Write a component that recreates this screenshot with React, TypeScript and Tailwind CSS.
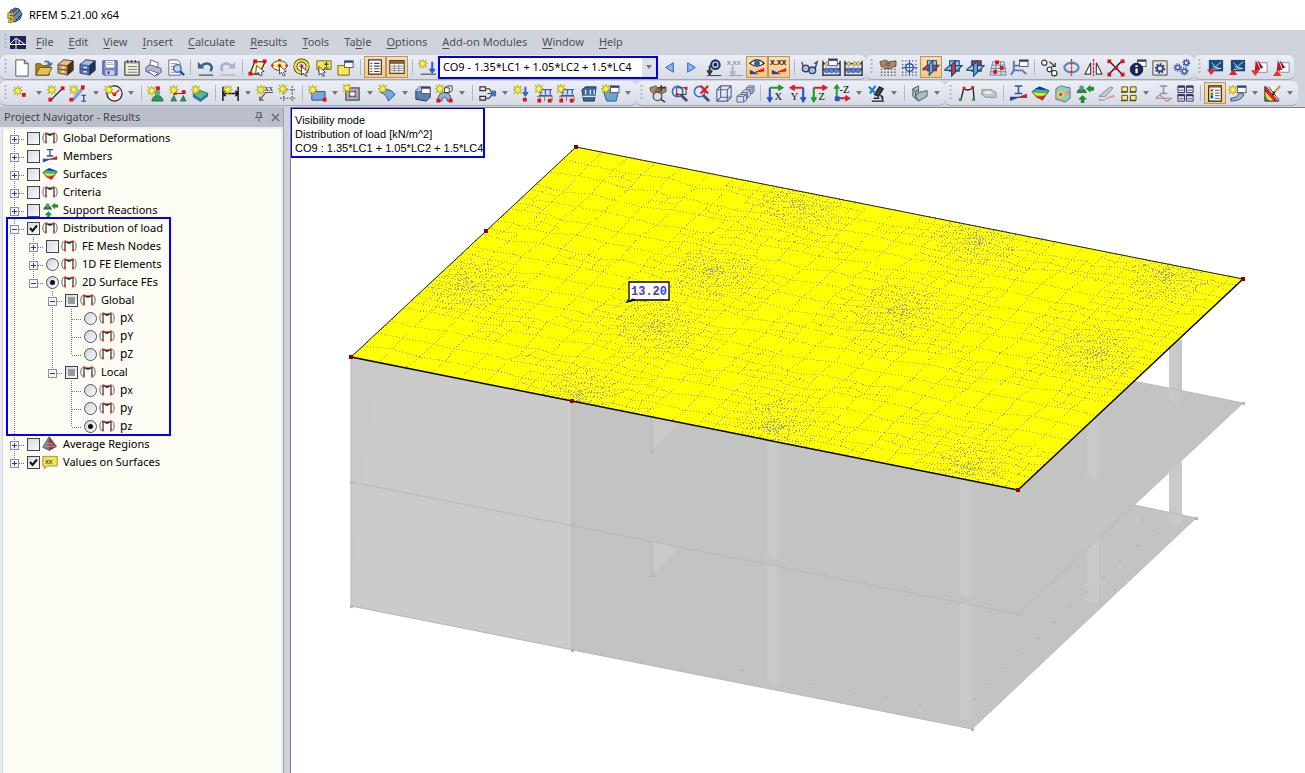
import React from 'react';

const Star = ({ x = 5, y = 5 }: { x?: number; y?: number }) => (
  <g transform={`translate(${x} ${y})`}>
    <path d="M0-5 1.2-2 4-4 2.3-1 5 0 2.3 1 4 4 1.2 2.4 0 5-1.2 2.4-4 4-2.3 1-5 0-2.3-1-4-4-1.2-2z" fill="#f7ec1c" stroke="#9a9420" strokeWidth=".6" />
    <circle r="1.2" fill="#fffbb0" />
  </g>
);

const Dot = ({ x, y, c = '#e0101c' }: { x: number; y: number; c?: string }) => (
  <rect x={x - 1.5} y={y - 1.5} width="4" height="4" fill={c} />
);

const Frame = () => (
  <g fill="none">
    <path d="M5 15V5h10v10M7 5q3 3 6 0" stroke="#222" strokeWidth="1.4" />
    <path d="M3 16Q-1 10 3 4M17 16Q21 10 17 4" stroke="#444" strokeWidth="1" />
    <path d="M4 3h3v2H4zM13 3h3v2h-3zM4 14h2v3H4zM14 14h2v3h-2z" fill="#d22" />
  </g>
);

const Window = ({ x = 10, y = 2 }: { x?: number; y?: number }) => (
  <g>
    <rect x={x} y={y} width="9" height="7" fill="#fff" stroke="#555b6e" />
    <path d={`M${x} ${y + 1}h9`} stroke="#2d3f7c" strokeWidth="2" />
  </g>
);

const Cube = ({ faces }: { faces: string[] }) => (
  <g stroke="#333" strokeWidth=".7">
    <path d="M2 7 8 2 18 3V13L12 18 2 16z" fill={faces[0]} />
    <path d="M2 7 8 2 18 3 12 8z" fill={faces[1]} />
    <path d="M12 8 18 3V13L12 18z" fill={faces[2]} />
    <path d="M2 11.500 12 13" fill="none" />
    <path d="M6 10h3M6 14.500h3" stroke="#fff" strokeWidth="1.600" />
  </g>
);

const Planes = ({ a, b, c }: { a: string; b: string; c: string }) => (
  <g stroke="#174a80" strokeWidth="1.200">
    <path d="M6 3h10v11H6z" fill={a} />
    <path d="M1 12 6 8h13l-5 5H1z" fill={b} />
    <path d="M8 7 12 3v12l-4 4z" fill={c} />
  </g>
);

const Loads = () => (
  <g fill="none">
    <path d="M4 6h14M4 12h14" stroke="#1f3f9c" />
    <path d="M6 6v5M11 6v5M16 6v5" stroke="#3b66cf" strokeWidth="1.500" />
    <path d="M2 13h16v5M5 13v5M10 13v5" stroke="#777" />
    <Dot x={4} y={17} />
    <Dot x={15} y={17} />
  </g>
);

const Abacus = () => (
  <g>
    <path d="M1 3v16M19 3v16M1 6h18M1 12h18M1 18h18" stroke="#222" strokeWidth="1.400" />
    <g fill="#e8d26a" stroke="#6f6420" strokeWidth=".6"><circle cx="5" cy="6" r="2" /><circle cx="15" cy="6" r="2" /><circle cx="11" cy="6" r="2" /></g>
    <g fill="#5580d6" stroke="#23407e" strokeWidth=".6"><circle cx="5" cy="13" r="2.600" /><circle cx="10" cy="13" r="2.600" /><circle cx="15" cy="13" r="2.600" /></g>
  </g>
);

const Lens = ({ c = '#3d66b8' }: { c?: string }) => (
  <g fill="none">
    <circle cx="8" cy="8" r="5.500" fill="#dfeaff" stroke={c} strokeWidth="1.600" />
    <path d="m12 12 6 6" stroke="#3e4d78" strokeWidth="3" />
  </g>
);

const Hand = () => (
  <g>
    <path d="M2 4 8 2l3 2 8-1v5l-6 3H7L3 8z" fill="#b08a68" stroke="#4a3626" strokeWidth=".8" />
    <path d="m8 5 5 1M7 7l6 1" stroke="#4a3626" strokeWidth=".8" />
  </g>
);

const Grid = () => (
  <path d="M3 9h16M3 12h16M3 15h16M3 18h16" stroke="#555" strokeWidth="1.500" strokeDasharray="1.500 2" />
);

const Axes = ({ v, h, t, flip = false }: { v: string; h: string; t: string; flip?: boolean }) => (
  <g>
    <g transform={flip ? 'translate(20 0) scale(-1 1)' : ''} fill="none" strokeWidth="2.200">
      <path d="M4 4v13M1.500 14 4 18l2.500-4" stroke={v} />
      <path d="M4 4h12M13 1.500 17 4l-4 2.500" stroke={h} />
    </g>
    <text x={flip ? 3 : 9} y="17" fontSize="11" fontFamily="Liberation Serif, serif" fill="#111">{t}</text>
  </g>
);

const Person = () => (
  <g><path d="M5 18Q6 12 11 12t6 6z" fill="#2c9a58" stroke="#14532e" strokeWidth=".7" /><circle cx="11" cy="9" r="3" fill="#4fb878" /></g>
);

const Profile = ({ c = '#2f559c' }: { c?: string }) => (
  <path d="M6 2h8M10 2v8M6 10h8" stroke={c} strokeWidth="1.600" fill="none" />
);

const ICONS: Record<string, React.ReactNode> = {
  new: <path d="M4 2h9l4 4v13H4zM13 2v4h4" fill="#fff" stroke="#555" />,
  open: <><path d="M2 18V6h5l2 2h7v10z" fill="#a8861c" stroke="#6a540e" /><path d="M2 18 6 10h13l-4 8z" fill="#e2c250" stroke="#6a540e" /><path d="M11 4q5-2 6 4M14 6l3 2 2-3" stroke="#3a76b4" strokeWidth="1.800" fill="none" /></>,
  cabinet: <Cube faces={['#d19a50', '#edc27c', '#4a3014']} />,
  cabinetBlue: <Cube faces={['#4f78c8', '#9dbcf0', '#1d2f60']} />,
  save: <><path d="M3 3h15v15H4l-1-1z" fill="#7d84c4" stroke="#3e4a88" /><path d="M6 3h9v7H6z" fill="#fff" /><path d="M7 5h7M7 7h7" stroke="#9aa" /><path d="M6 13h9v5H6z" fill="#c9cfe8" /><path d="M8 14h2v3H8z" fill="#333e78" /></>,
  notes: <><path d="M3 4h15v14H3z" fill="#f5efe0" stroke="#4a4440" strokeWidth="1.300" /><path d="M4 5h13" stroke="#b8a890" strokeWidth="2" /><path d="M6 9h10M6 12h10M6 15h10" stroke="#777" /><path d="M6 2v3M10 2v3M14 2v3" stroke="#444" strokeWidth="1.400" /></>,
  print: <><path d="M6 9 7 2l8 3-1 6z" fill="#fff" stroke="#667" /><path d="M2 10 6 7l12 4v4l-5 4L2 14z" fill="#b4b9da" stroke="#555b7a" /><path d="m4 14 7 5 4-3-8-3z" fill="#fff" stroke="#667" /></>,
  preview: <><path d="M3 2h9l3 3v13H3z" fill="#fff" stroke="#667" /><path d="M5 6h7M5 9h5M5 12h4M5 15h5" stroke="#889" /><circle cx="12" cy="11" r="4" fill="#b7d2f4" stroke="#3c62a0" strokeWidth="1.400" /><path d="m15 14 4 4" stroke="#334f86" strokeWidth="2.500" /></>,
  undo: <><path d="M2 4v7h7z" fill="#3c6090" /><path d="M5 9q5-5 10-2 3 3 0 7" fill="none" stroke="#3c6090" strokeWidth="2.600" /><path d="M3 18h15" stroke="#222" /></>,
  redo: <><path d="M18 4v7h-7z" fill="#a3b4cc" /><path d="M15 9q-5-5-10-2-3 3 0 7" fill="none" stroke="#a3b4cc" strokeWidth="2.600" /><path d="M3 18h15" stroke="#9aa3b4" /></>,
  selectRhomb: <><path d="M7 4h11l-6 13H2z" fill="#faf296" stroke="#222" strokeWidth="1.200" /><Dot x={7} y={3} /><Dot x={17} y={3} /><Dot x={2} y={16} /><path d="m9 8 8 6-3 1 1 3-2 1-2-4-3 2z" fill="#fff" stroke="#222" strokeWidth=".8" /></>,
  selectEllipse: <><ellipse cx="10" cy="8" rx="8" ry="5" fill="#faf296" stroke="#444" /><path d="M8.500 2h3M10 6v4M8 8h4M1 8h3M16 8h3" stroke="#d22" strokeWidth="1.800" /><path d="m10 8 7 6-3 1 2 3-2 1-2-4-2 2z" fill="#fff" stroke="#222" strokeWidth=".8" /></>,
  selectRing: <><circle cx="10" cy="9" r="6.500" fill="none" stroke="#222" strokeWidth="4" /><circle cx="10" cy="9" r="6.500" fill="none" stroke="#f5e52a" strokeWidth="2.600" /><path d="M10 6v5M8 8.500h4" stroke="#d22" strokeWidth="1.600" /><path d="m10 9 7 6-3 1 2 3-2 0-2-3-2 2z" fill="#fff" stroke="#222" strokeWidth=".8" /></>,
  selectAdd: <><path d="M3 3h15v9H9l-4 3v-3H3z" fill="#f7ea57" stroke="#6b6420" /><path d="M13 4v5M10.500 6.500h5M10.500 10.500h5" stroke="#222" /><path d="m5 9 7 6-3 1 2 3h-2l-1.500-3-2 2z" fill="#fff" stroke="#222" strokeWidth=".8" /></>,
  selectWin: <><path d="M2 8h12v10H2z" fill="#f7ea57" stroke="#6b6420" /><Window x={9} y={3} /></>,
  navigator: <><path d="M3 2h14v16H3z" fill="#fff" stroke="#333" strokeWidth="1.300" /><path d="M5 6h2M5 9h2M5 12h2M5 15h2M9 6h6M9 9h6M9 12h6M9 15h6" stroke="#444" strokeWidth="1.200" /></>,
  tables: <><path d="M2 3h16v14H2z" fill="#fff" stroke="#444" strokeWidth="1.300" /><path d="M2 5h16" stroke="#8a5a2a" strokeWidth="3" /><path d="M3 9h14M3 11.500h14M3 14h14M7 7v10M12 7v10" stroke="#888" /></>,
  newLoad: <><Star x={5} y={6} /><path d="M15 4v10M12.500 11.500 15 15l2.500-3.500" stroke="#2f5fc4" strokeWidth="2.200" fill="none" /><path d="M3 17h16" stroke="#333" /></>,
  prev: <path d="M14 5v10l-8-5z" fill="#8fb4f0" stroke="#2a5cc4" />,
  next: <path d="M6 5v10l8-5z" fill="#8fb4f0" stroke="#2a5cc4" />,
  resultEye: <><circle cx="12" cy="7" r="4.500" fill="#bcd2f4" stroke="#1f3560" strokeWidth="2.200" /><circle cx="12" cy="7" r="2" fill="#162848" /><path d="M6 8v8M3.500 13 6 17 8.500 13" stroke="#333" strokeWidth="2" fill="none" /><path d="M3 18.500h15" stroke="#333" /></>,
  valueGrey: <><text x="1" y="7" fontSize="8" fontFamily="Liberation Sans, sans-serif" fill="#777">x.xx</text><path d="M7 8v9M4.500 14 7 17.500 9.500 14" stroke="#a8b4cc" strokeWidth="2" fill="none" /><path d="M3 18.500h15" stroke="#999" /></>,
  showResults: <><path d="M2 6Q10-2 18 6 10 12 2 6z" fill="#fff" stroke="#222" strokeWidth="1.300" /><circle cx="10" cy="6" r="3.200" fill="#2c5fb8" /><path d="M4 17 18 11v4z" fill="#d8232a" /><path d="M2 13v5h10z" fill="#2540b4" /></>,
  showValues: <><text x="0" y="8" fontSize="8" fontWeight="bold" fontFamily="Liberation Sans, sans-serif" fill="#111">X.XX</text><path d="M4 17 18 11v4z" fill="#d8232a" /><path d="M2 13v5h10z" fill="#2540b4" /></>,
  glasses: <g fill="#a9bde0" stroke="#2f3f6c" strokeWidth="1.400"><circle cx="6" cy="11" r="3.500" /><circle cx="13" cy="13" r="3.500" /><path d="M3 8 2 4M16 11l2-7-3 2" fill="none" /></g>,
  abacusWin: <><Abacus /><Window x={7} y={1} /></>,
  abacus: <Abacus />,
  handGrid: <><Grid /><Hand /></>,
  snapGrid: <><path d="M2 3h16M2 7h16M2 11h16M2 15h16M2 18h16" stroke="#667" strokeWidth="1.500" strokeDasharray="1.500 2" /><circle cx="10" cy="10" r="4" fill="#e7eefb" stroke="#2555b2" strokeWidth="1.500" /><path d="M10 2v16M2 10h16" stroke="#2555b2" /></>,
  planeXY: <Planes a="#a9cfee" b="#e0342c" c="#6fa8dc" />,
  planeYZ: <Planes a="#a9cfee" b="#8fc0e8" c="#e0342c" />,
  planeXZ: <Planes a="#e0242c" b="#a9cfee" c="#6fa8dc" />,
  gridPlane: <><path d="M5 4h12l2 14H2zM3.500 11h15M9 4 7 18M13 4l1 14M4 7.500h14M3 14.500h16" fill="none" stroke="#6f8494" /><Dot x={9} y={4} /><Dot x={14} y={10} /><Dot x={7} y={14} /></>,
  workWin: <><path d="M4 3v10M4 8h8M4 13h10M4 13l-3 5M13 13l4 4" stroke="#5c76a4" strokeWidth="2" fill="none" /><Window /></>,
  move: <g fill="#fff" stroke="#333" strokeWidth="1.200"><circle cx="4.500" cy="5" r="2.800" /><circle cx="10" cy="12" r="2.500" /><circle cx="15" cy="16" r="2.800" /><path d="m10 4 6 5M16 5v4h-4" fill="none" /></g>,
  rotate: <><ellipse cx="10" cy="10" rx="7.500" ry="5" fill="none" stroke="#5f86c0" strokeWidth="2.400" /><path d="M10 1v18" stroke="#e02020" strokeWidth="1.400" strokeDasharray="3 1" /></>,
  mirror: <><path d="M7 5v12H1zM13 5v12h6z" fill="#fff" stroke="#444" strokeWidth="1.200" /><path d="M10 1v18" stroke="#e02020" strokeWidth="1.400" strokeDasharray="3 1" /></>,
  cross: <><path d="m3 3 14 14M17 3 3 17" stroke="#222" strokeWidth="1.500" /><Dot x={3} y={3} /><Dot x={17} y={3} /><Dot x={3} y={17} /><Dot x={17} y={17} /><Dot x={10} y={10} /></>,
  info: <><Window /><circle cx="9" cy="12" r="6.500" fill="#1a2460" stroke="#0c1238" /><path d="M9 11v5M9 7.500v2" stroke="#fff" strokeWidth="2.400" /></>,
  settings: <><path d="M3 3h15v15H3z" fill="#ece6d4" stroke="#444" /><circle cx="10.500" cy="11" r="4.500" fill="none" stroke="#2c4a8e" strokeWidth="2" strokeDasharray="2 1.400" /><circle cx="10.500" cy="11" r="3" fill="#fff" stroke="#2c4a8e" strokeWidth="2" /></>,
  gears: (
    <g fill="#fff" stroke="#3c5fa8">
      <g strokeWidth="1.600"><circle cx="6" cy="10" r="2.200" /><circle cx="15" cy="5" r="2.200" /><circle cx="13" cy="14" r="2.200" /></g>
      <g fill="none" strokeWidth="1.500" strokeDasharray="1.300 1.300"><circle cx="6" cy="10" r="3.700" /><circle cx="15" cy="5" r="3.500" /><circle cx="13" cy="14" r="3.700" /></g>
    </g>
  ),
  exportDown: <><path d="M3 2h15v12H3z" fill="#174a80" /><path d="m6 5 4 4 6-5M6 12l10-1M7 9l8 2" stroke="#cfe2f4" fill="none" /><path d="M1 12h9l-4.500 6z" fill="#e0242c" /></>,
  exportUp: <><path d="M3 2h15v12H3z" fill="#174a80" /><path d="m6 5 4 4 6-5M6 12l10-1M7 9l8 2" stroke="#cfe2f4" fill="none" /><path d="M1 18h9l-4.500-6z" fill="#e0242c" /></>,
  pdfDown: <><path d="M8 5h10v10H8z" fill="#fff" stroke="#889" /><path d="M6 2 11 12 5 14z" fill="#c81420" /><path d="M1 13h9l-4.500 6z" fill="#e0342c" /><path d="M8 2l6 8-3 1z" fill="#8c0e16" /></>,
  pdfUp: <><path d="M8 5h10v10H8z" fill="#fff" stroke="#889" /><path d="M6 2 11 12 5 14z" fill="#c81420" /><path d="M1 19h9l-4.500-6z" fill="#e0342c" /><path d="M8 2l6 8-3 1z" fill="#8c0e16" /></>,
  node: <><Star x={6} y={7} /><Dot x={12} y={11} /></>,
  line: <><path d="M4 17 17 4" stroke="#222" strokeWidth="1.300" /><Star x={5} y={6} /><Dot x={3} y={16} /><Dot x={16} y={4} /></>,
  member: <><path d="M4 17 15 4" stroke="#7fa6d8" strokeWidth="3.500" /><Star x={5} y={6} /><Dot x={2} y={16} /><Dot x={14} y={3} /><path d="M13 12h5M15.500 12v6M13 18h5" stroke="#3a5aa0" strokeWidth="1.500" /></>,
  arc: <><circle cx="11" cy="10" r="8" fill="#f4f4f4" stroke="#222" strokeWidth="1.300" /><path d="m11 11 5-5M11 11 7 8" stroke="#d22" strokeWidth="1.400" fill="none" /><circle cx="11" cy="11" r="2" fill="#d22" /><Star x={5} y={6} /></>,
  support: <><Person /><Dot x={11} y={4} /><Star x={5} y={7} /></>,
  supports: <><path d="M5 10h11" stroke="#333" /><path d="m2 18 3-6 3 6zM12 18l3-6 3 6z" fill="#2c9a58" stroke="#14532e" strokeWidth=".6" /><Dot x={15} y={8} /><Dot x={6} y={9} /><Star x={5} y={6} /></>,
  foundation: <><path d="m2 11 8-4 8 3-8 6z" fill="#54bd8c" stroke="#1e6c4a" /><path d="m2 11 8 5 8-6v3l-8 6-8-5z" fill="#3571b8" /><Star x={5} y={6} /></>,
  dimension: <><path d="M2 3v15M18 3v15M2 10h16M5 7l-3 3 3 3M15 7l3 3-3 3" stroke="#111" strokeWidth="1.500" fill="none" /><Star x={7} y={6} /></>,
  dimensionXX: <><text x="9" y="7" fontSize="9" fontFamily="Liberation Serif, serif" fill="#111">xx</text><path d="M18 9H10L4 17M4 13v4h4" stroke="#555" strokeWidth="1.200" fill="none" /><Star x={5} y={6} /></>,
  guide: <><path d="M6 2v17M15 2v17M2 6h17M2 15h17" stroke="#555" strokeWidth="1.200" strokeDasharray="2 1.500" /><Star x={5} y={5} /></>,
  surface: <><path d="M4 8h14v9H4z" fill="#7aa6dc" stroke="#26528c" /><Star x={5} y={6} /><Dot x={17} y={16} /></>,
  opening: (
    <>
      <path d="M3 4h14v13H3z" fill="#9fb4cc" stroke="#555" strokeWidth="1.300" />
      <path d="M7 8h6v5H7z" fill="#e6edf6" stroke="#555" />
      <path d="M6 7h2v2H6zM12 7h2v2h-2zM6 12h2v2H6zM12 12h2v2h-2z" fill="#d22" />
      <Star x={4} y={4} />
    </>
  ),
  shell: <><path d="M3 9q8-7 15 2l-7 7Q9 11 3 9z" fill="#7aa6dc" stroke="#1d4a88" /><Star x={5} y={5} /></>,
  solid: <><path d="m3 7 4-4 11 1v10l-4 4-11-2z" fill="#5c7fae" stroke="#1f3352" /><path d="m3 7 4-4 11 1-5 4z" fill="#a8c2e4" /><Window x={9} y={3} /></>,
  volume: <><path d="M3 18q0-9 7-9t7 9h-4q0-4-3-4t-3 4z" fill="#9ab2d4" stroke="#33486a" /><path d="M10 4h5v5h-5zM10 4l3-2h5v5l-3 2" fill="#fff" stroke="#333" /><Star x={5} y={5} /><Dot x={3} y={17} /><Dot x={16} y={17} /></>,
  split: <><path d="M2 3h6v4H2zM2 13h6v4H2zM8 5h4l3 5-3 5H8M10 10h8" fill="none" stroke="#333" strokeWidth="1.200" /><path d="M14 7h5v6h-5z" fill="#3f74c4" /></>,
  nodalLoad: <><Star x={5} y={6} /><path d="M13 3v8M10.500 8.500 13 12l2.500-3.500" stroke="#2f5fc4" strokeWidth="2" fill="none" /><Dot x={12} y={16} /></>,
  lineLoad: <><Loads /><Star x={4} y={5} /></>,
  memberLoad: <><Loads /><Star x={4} y={5} /></>,
  surfaceLoad: <><path d="m3 6 4-3h11l-2 15H5z" fill="#3c6896" stroke="#1b3658" /><path d="M7 6v5M12 6v5M16 6v5M4 13h13" stroke="#dfeaff" strokeWidth="1.500" /></>,
  solidLoad: <><path d="m3 9 8-3 7 3-2 9H6z" fill="#6ba4d0" stroke="#2c5a86" /><Window /><Star x={5} y={5} /></>,
  pan: <><Hand /><circle cx="10" cy="13" r="4.500" fill="#ddd" stroke="#555" strokeWidth="1.400" /><path d="m13 16 5 3M14 1v7M11 4h7" stroke="#333" strokeWidth="1.600" /></>,
  zoomWin: <><Lens /><path d="M7 4h10v7H7z" fill="none" stroke="#333" /><path d="M15.500 3h3v3h-3zM6 9.500h3v3H6z" fill="#d22" /></>,
  zoomOff: <><Lens /><path d="m9 2 8 8M17 2l-8 8" stroke="#d22" strokeWidth="2.400" /></>,
  wireBox: <path d="M3 6h11v12H3zM3 6l4-4h11v12l-4 4M14 6l4-4M7 2v12M3 18l4-4h11" fill="#e4ebf8" fillOpacity=".6" stroke="#54658c" strokeWidth="1.200" />,
  boxes: (
    <g fill="#d4def0" stroke="#54658c">
      <path d="m11 4 2-2h6v6l-2 2h-6zM11 4h6v6M17 4l2-2" />
      <path d="m6 9 3-3h6v6l-3 3H6zM6 9h6v6M12 9l3-3" />
      <path d="m1 13 3-2h7v6l-3 2H1zM1 13h7v6M8 13l3-2" />
    </g>
  ),
  viewX: <Axes v="#1f56d0" h="#1f9a34" t="X" />,
  viewY: <Axes v="#1f56d0" h="#d8202a" t="Y" flip />,
  viewZ: <Axes v="#1f9a34" h="#d8202a" t="Z" />,
  viewMinusZ: <><path d="M5 2v14M2.500 5 5 1.500 7.500 5" stroke="#1f9a34" strokeWidth="2" fill="none" /><path d="M5 15h12M14 12.500l4 2.500-4 2.500" stroke="#d8202a" strokeWidth="2" fill="none" /><path d="M3 13h5v5H3z" fill="#1f56d0" /><text x="8" y="9" fontSize="11" fontFamily="Liberation Serif, serif">-Z</text></>,
  microscope: <><path d="m13 3 4 2-5 8-4-2zM14 12q4 1 2 5M5 18h13M7 15h6" fill="#444" stroke="#222" strokeWidth="1.400" /><path d="m2 3 7 7M9 2 3 10" stroke="#1f7ac8" strokeWidth="2.200" /></>,
  iso: <><path d="m3 5 6-3v7l9-2v6l-9 5-6-5z" fill="#a9bcc0" stroke="#4a5c60" /><path d="m3 5 3 3v7M6 8l3-2M9 9l-3 4 3 5" stroke="#4a5c60" fill="none" /></>,
  deform: <><path d="M4 17 7 5q5 3 10-1l1 13" fill="none" stroke="#222" strokeWidth="1.400" /><path d="M6 3h3v3H6zM15 2h3v3h-3z" fill="#d22" /><path d="M2 15h3v3H2zM16 15h3v3h-3z" fill="#1fa33c" /></>,
  roll: <><path d="M3 6h10l5 3v5H7l-4-3z" fill="#c4c6ca" stroke="#8a8d94" /><path d="M6 9h7" stroke="#fff" strokeWidth="2" /></>,
  members: <><Profile /><path d="M1 14v4l10-4z" fill="#2540e4" /><path d="M9 14l10-4v4z" fill="#e0242c" /><path d="M1 14h18" stroke="#333" /></>,
  surfaces: (
    <>
      <path d="M1 8 9 3l10 4-7 10q-3-2-6-3Z" fill="#e0242c" />
      <path d="M1 8 9 3l10 4-3 4q-5 3-10 2z" fill="#f6a024" />
      <path d="M1 8 9 3l10 4-3 4q-5 2-12 0z" fill="#f6ee24" />
      <path d="M1 8 9 3l10 4-2 3q-5 0-14-1z" fill="#2fc84a" />
      <path d="M2 7 9 3l10 4-1 1q-6-1-10 0z" fill="#24b4e4" />
      <path d="m4 5 5-2 10 4q-5-1-9-1z" fill="#1a30d4" />
      <path d="M1 8 9 3l10 4-7 10q-3-2-6-3Z" fill="none" stroke="#333" strokeWidth=".7" />
    </>
  ),
  solids: <><path d="m3 5 5-3 10 2v11l-5 4-10-3z" fill="#8fd0b8" stroke="#557" strokeWidth=".8" /><circle cx="8" cy="11" r="3.500" fill="#f0d84a" /><circle cx="8" cy="11" r="1.800" fill="#e0442c" /><circle cx="15.500" cy="9" r="2" fill="#e88" /></>,
  reactions: <><path d="M2 9q1-4 5-4t5 4z" fill="#2c8a48" stroke="#184c28" strokeWidth=".7" /><circle cx="7" cy="4" r="2.500" fill="#56a070" /><path d="M12 5l4-3.500v2h4v3h-4v2zM8 12l4 4h-2.500v4h-3v-4H4z" fill="#1a9a2a" stroke="#0c5a16" strokeWidth=".5" /></>,
  knife: <><path d="M2 13 14 3l3 1L9 13z" fill="#c6cad4" stroke="#888" /><path d="M2 18 18 11v3z" fill="#d8a0a4" /><path d="M2 15v3h7z" fill="#a4acd8" /></>,
  panels: <g fill="#f2e890" stroke="#55501a"><path d="M3 3h6v5H3zM12 3h6v5h-6zM3 12h6v5H3zM12 12h6v5h-6z" /><path d="M2 8.500h7M11 8.500h7M2 17.500h7M11 17.500h7" strokeWidth="1.500" /></g>,
  stress: <><Profile c="#8b93b4" /><path d="M2 15q4-6 8 0t8 0" stroke="#d44" fill="none" /><path d="M2 15h17" stroke="#88a" /></>,
  tableBlue: <g stroke="#1f3566"><path d="M2 2h7v7H2zM11 2h7v7h-7zM2 11h7v7H2zM11 11h7v7h-7z" fill="#e4ecf8" /><path d="M2 3h7M11 3h7M2 12h7M11 12h7" strokeWidth="2" /><path d="M3 6.500h5M12 6.500h5M3 15.500h5M12 15.500h5" stroke="#d22" /></g>,
  legend: <><path d="M3 2h14v17H3z" fill="#fff" stroke="#222" strokeWidth="1.300" /><path d="M3 3h14" stroke="#8a5a2a" strokeWidth="2" /><path d="M5 6h3v2H5z" fill="#d22" /><path d="M5 8h3v2H5z" fill="#fb2" /><path d="M5 10h3v3H5z" fill="#2a4" /><path d="M5 13h3v3H5z" fill="#24c" /><path d="M10 7h5M10 10h5M10 13h5M10 16h5" stroke="#444" /></>,
  newView: <><path d="M3 15q7 0 9-6l5 2q-3 7-14 7z" fill="#9fb6d8" stroke="#38507c" /><Window /><Star x={5} y={6} /></>,
  colors: (
    <>
      <path d="M2 3h14v15H2z" fill="#fff" />
      <path d="M2 3h2l12 15h-5L2 8z" fill="#e0242c" />
      <path d="m2 8 9 10H7l-5-6z" fill="#f6e224" />
      <path d="m2 12 5 6H2z" fill="#2fb84a" />
      <path d="M2 2v16h15M6 3l11 14" stroke="#222" fill="none" />
      <path d="m18 2-6 7" stroke="#c89a4a" strokeWidth="2.400" />
      <path d="m12 8-2 4" stroke="#222" strokeWidth="2" />
    </>
  ),
  regions: <><path d="M9 1 18 13 9 18 1 14z" fill="#a03a48" stroke="#333" /><path d="M9 1 8 11l1 7-8-4z" fill="#6c8394" /><path d="m5 9 9 1M3 13l14 0" stroke="#d9a0a8" /></>,
  valuesXX: <><path d="M1 3h18v12H7l-4 3v-3H1z" fill="#f2e355" stroke="#8a8228" /><text x="4" y="12" fontSize="9" fontFamily="Liberation Sans, sans-serif" fill="#222">xx</text></>,
  frame: <Frame />,
};

const Icon = ({ name, size = 20 }: { name: string; size?: number }) => (
  <svg viewBox="0 0 20 20" width={size} height={size} className="shrink-0">{ICONS[name]}</svg>
);

// '|' is a separator, a trailing '+' adds a drop-down arrow, a leading '*' marks a pressed button
const FILE_BAR = ['new', 'open', 'cabinet', 'cabinetBlue', 'save', 'notes', 'print', 'preview', '|', 'undo', 'redo', '|',
  'selectRhomb', 'selectEllipse', 'selectRing', 'selectAdd', 'selectWin', '|', '*navigator', '*tables', '|', 'newLoad'];
const RESULT_BAR = ['prev', 'next', 'resultEye', 'valueGrey', '*showResults', '*showValues', '|', 'glasses', 'abacusWin', 'abacus'];
const EDIT_BAR = ['handGrid', 'snapGrid', '*planeXY', 'planeYZ', 'planeXZ', 'gridPlane', 'workWin', '|', 'move', 'rotate', 'mirror', 'cross', 'info', 'settings', 'gears'];
const EXPORT_BAR = ['exportDown', 'exportUp', 'pdfDown', 'pdfUp'];
const INSERT_BAR = ['node+', 'line', 'member+', 'arc+', '|', 'support', 'supports', 'foundation', '|', 'dimension+', 'dimensionXX', 'guide', '|',
  'surface+', 'opening+', 'shell+', 'solid', 'volume+', '|', 'split+', 'nodalLoad', 'lineLoad', 'memberLoad', 'surfaceLoad', 'solidLoad+'];
const VIEW_BAR = ['pan', 'zoomWin', 'zoomOff', 'wireBox', 'boxes', '|', 'viewX', 'viewY', 'viewZ', 'viewMinusZ+', 'microscope+', '|', 'iso+'];
const DISPLAY_BAR = ['deform', 'roll', '|', 'members', 'surfaces', 'solids', 'reactions', 'knife', 'panels+', 'stress', 'tableBlue', '|', '*legend', 'newView+', 'colors+'];

const Arrow = () => (
  <svg viewBox="0 0 6 4" width="6" height="4"><path d="M0 0h6L3 4z" fill="#777" /></svg>
);

const ToolItems = ({ items }: { items: string[] }) => (
  <>
    {items.map((item, i) => {
      if (item === '|') {
        return <div key={i} className="flex h-full w-2 shrink-0 items-center justify-center"><span className="h-4 w-px bg-[#b4b8c2]" /></div>;
      }
      const name = item.replace(/[*+]/g, '');
      const pressed = item.startsWith('*');
      return (
        <React.Fragment key={i}>
          <button
            aria-label={name}
            className={`flex h-[22px] w-[22px] shrink-0 items-center justify-center ${pressed ? 'border border-[#b0976c] bg-linear-to-b from-[#fbdcae] to-[#fdc877]' : ''}`}
          >
            <Icon name={name} size={pressed ? 18 : 19} />
          </button>
          {item.endsWith('+') && (
            <button aria-label={`${name} options`} className="flex h-[22px] w-[13px] shrink-0 items-center justify-center">
              <Arrow />
            </button>
          )}
        </React.Fragment>
      );
    })}
  </>
);

const Bar = ({ children }: { children: React.ReactNode }) => (
  <div className="flex h-[25px] shrink-0 items-center rounded-md border-b border-[#a3a8b5] bg-linear-to-b from-[#eceff6] to-[#d7dbe5] pr-0.5">
    <div className="flex w-2.5 shrink-0 justify-center">
      <svg width="3" height="16"><path d="M1.500 0v16" stroke="#b2b6c0" strokeWidth="2" strokeDasharray="2 2" /></svg>
    </div>
    {children}
  </div>
);

const MENU = ['File', 'Edit', 'View', 'Insert', 'Calculate', 'Results', 'Tools', 'Table', 'Options', 'Add-on Modules', 'Window', 'Help'];
const HOTKEY = [0, 0, 0, 0, 0, 0, 0, 2, 0, 0, 0, 0];

type Row = {
  depth: number;
  label: React.ReactNode;
  icon?: string;
  kind?: 'check' | 'radio' | 'mixed';
  checked?: boolean;
  open?: boolean;
  leaf?: boolean;
  last?: boolean;
  lines?: boolean[];
};

const sub = (s: string) => <span className="text-[12px]">p<span className="text-[10px]">{s}</span></span>;

const TOP_ROWS: Row[] = [
  { depth: 0, label: 'Global Deformations' },
  { depth: 0, label: 'Members', icon: 'members' },
  { depth: 0, label: 'Surfaces', icon: 'surfaces' },
  { depth: 0, label: 'Criteria' },
  { depth: 0, label: 'Support Reactions', icon: 'reactions' },
];
const LOAD_ROWS: Row[] = [
  { depth: 0, label: 'Distribution of load', checked: true, open: true },
  { depth: 1, label: 'FE Mesh Nodes' },
  { depth: 1, label: '1D FE Elements', kind: 'radio' },
  { depth: 1, label: '2D Surface FEs', kind: 'radio', checked: true, open: true, last: true },
  { depth: 2, label: 'Global', kind: 'mixed', open: true },
  { depth: 3, label: sub('X'), kind: 'radio', leaf: true, lines: [true, false, true] },
  { depth: 3, label: sub('Y'), kind: 'radio', leaf: true, lines: [true, false, true] },
  { depth: 3, label: sub('Z'), kind: 'radio', leaf: true, last: true, lines: [true, false, true] },
  { depth: 2, label: 'Local', kind: 'mixed', open: true, last: true },
  { depth: 3, label: sub('x'), kind: 'radio', leaf: true, lines: [true, false, false] },
  { depth: 3, label: sub('y'), kind: 'radio', leaf: true, lines: [true, false, false] },
  { depth: 3, label: sub('z'), kind: 'radio', leaf: true, last: true, checked: true, lines: [true, false, false] },
];
const BOTTOM_ROWS: Row[] = [
  { depth: 0, label: 'Average Regions', icon: 'regions' },
  { depth: 0, label: 'Values on Surfaces', icon: 'valuesXX', checked: true, last: true },
];

const TreeRow = ({ row, group }: { row: Row; group: string }) => {
  const { depth, label, icon = 'frame', kind = 'check', checked, open, leaf, last } = row;
  const box = kind === 'radio'
    ? 'rounded-full border-[#555] bg-linear-to-br from-[#c9d2de] to-white'
    : 'border-[#444] bg-linear-to-br from-[#d5dae4] to-[#f8f9fb]';

  return (
    <li className="flex h-[18px] items-center whitespace-nowrap">
      {Array.from({ length: depth }, (_, i) => (
        <svg key={i} width="19" height="18" className="shrink-0">
          {(row.lines ? row.lines[i] : i === 0) && <path d="M9.500 0v18" stroke="#777" strokeDasharray="1 1" />}
        </svg>
      ))}
      <svg width="19" height="18" className="shrink-0" shapeRendering="crispEdges">
        <path d={last ? 'M9.5 0v10' : 'M9.5 0v18'} stroke="#777" strokeDasharray="1 1" />
        <path d="M10 10.500h9" stroke="#777" strokeDasharray="1 1" />
        {!leaf && (
          <>
            <rect x="5.500" y="6.500" width="8" height="8" fill="#f4f5f8" stroke="#8c8f98" />
            <path d={open ? 'M7 10.5h5' : 'M7 10.5h5M9.5 8v5'} stroke="#23418f" />
          </>
        )}
      </svg>
      <label className="ml-[3px] flex items-center">
        <span className="relative flex h-[13px] w-[13px] shrink-0">
          <input
            type={kind === 'radio' ? 'radio' : 'checkbox'}
            name={kind === 'radio' ? group : undefined}
            defaultChecked={checked}
            className={`peer h-[13px] w-[13px] appearance-none border ${box}`}
          />
          {kind === 'check' && (
            <svg viewBox="0 0 13 13" className="pointer-events-none absolute inset-0 hidden peer-checked:block">
              <path d="m3 6 2.500 3L10 3.500" fill="none" stroke="#111" strokeWidth="2" />
            </svg>
          )}
          {kind === 'radio' && <span className="pointer-events-none absolute inset-[4px] hidden rounded-full bg-[#111] peer-checked:block" />}
          {kind === 'mixed' && <span className="pointer-events-none absolute inset-[3px] bg-[#9a9a9a]" />}
        </span>
        <span className="ml-0.5 mr-[5px] flex w-4"><Icon name={icon} size={16} /></span>
        <span className="pb-px text-[11px] leading-4">{label}</span>
      </label>
    </li>
  );
};

const hash = (x: number, y: number) => {
  const s = Math.sin(x * 127.1 + y * 311.7) * 43758.5453;
  return s - Math.floor(s);
};

const ROOF_A = [576, 147];
const ROOF_U = [667, 132];
const ROOF_V = [-225, 211];

// column heads, as fractions along both roof edges
const HEADS = [
  [0.354, 0.054], [0.617, 0.055], [0.898, 0.045], [0.334, 0.385], [0.613, 0.391], [0.914, 0.402],
  [0.043, 0.62], [0.334, 0.638], [0.33, 0.97], [0.615, 0.94], [0.909, 0.955],
];

const toScreen = (u: number, v: number) => {
  const edge = u < 0.001 || v < 0.001 || u > 0.999 || v > 0.999;
  const k = edge ? 0 : 0.009;
  const a = u + (hash(u * 91, v * 57) - 0.5) * k;
  const b = v + (hash(v * 73, u * 39) - 0.5) * k * 2;
  return [ROOF_A[0] + a * ROOF_U[0] + b * ROOF_V[0], ROOF_A[1] + a * ROOF_U[1] + b * ROOF_V[1]];
};

const buildMesh = () => {
  const parts: string[] = [];
  const split = (u: number, v: number, du: number, dv: number, level: number) => {
    const cu = u + du / 2;
    const cv = v + dv / 2;
    const dist = Math.min(...HEADS.map(([hu, hv]) => {
      const x = (cu - hu) * ROOF_U[0] + (cv - hv) * ROOF_V[0];
      const y = (cu - hu) * ROOF_U[1] + (cv - hv) * ROOF_V[1];
      return Math.hypot(x, y * 1.5);
    }));
    const limit = [64, 38, 10][level];
    const loose = level === 0 && hash(cu, cv) > 0.8;
    if (level < 3 && (dist < limit || loose)) {
      for (const [i, j] of [[0, 0], [1, 0], [0, 1], [1, 1]]) {
        split(u + (i * du) / 2, v + (j * dv) / 2, du / 2, dv / 2, level + 1);
      }
      return;
    }
    const p = [toScreen(u + du, v), toScreen(u, v), toScreen(u, v + dv)].map((q) => q.map(Math.round).join(' '));
    parts.push(`M${p[0]}L${p[1]}L${p[2]}`);
  };
  const nu = 25;
  const nv = 17;
  for (let i = 0; i < nu; i++) {
    for (let j = 0; j < nv; j++) split(i / nu, j / nv, 1 / nu, 1 / nv, 0);
  }
  return parts.join('');
};

const MESH = buildMesh();

const Column = ({ x, top, bottom }: { x: number; top: number; bottom: number }) => (
  <g>
    <path d={`M${x} ${top}h13V${bottom + 1}l-4 1-9-2z`} fill="#c9c9c9" />
    <path d={`M${x + 9} ${top}h4V${bottom + 1}l-4 1z`} fill="#c6c6c6" />
  </g>
);

const SUPPORTS = [[742, 670], [813, 684], [848, 691], [884, 698], [919, 705], [955, 712], [974, 699], [989, 684], [1005, 668],
  [1021, 653], [1038, 638], [1054, 622], [1070, 607], [1086, 592], [1103, 577], [1119, 561], [1136, 546], [1152, 531], [1142, 520]];

const Model = () => (
  <svg viewBox="291 108 1014 665" width="1014" height="665" className="block shrink-0" role="img" aria-label="Building model">
    <path d="M351 606 572 650 972 729 1196 518 1120 503V440H351z" fill="#c3c3c3" />
    <path d="M351 357 1018 490 1133 381 1243 403 1018 614 572 525 351 482z" fill="#c3c3c3" />
    <path d="M351 357 572 401V650L351 606z" fill="#cbcbcb" />
    <path d="M351 357 380 363Q367 420 351 600z" fill="#cacaca" />
    <path d="m652 417 28 6-28 28zM652 541l28 6-28 28z" fill="#c9c9c9" />
    <path d="M1134 505 1243 403V480L1196 518z" fill="#fff" />
    <path d="m1134 505 62 13-62 56z" fill="#c3c3c3" />
    <Column x={767} top={436} bottom={557} />
    <Column x={767} top={565} bottom={681} />
    <Column x={960} top={476} bottom={595} />
    <Column x={960} top={603} bottom={719} />
    <Column x={1087} top={420} bottom={477} />
    <path d="M1087 550 1099 539V602l-4 1-8-1z" fill="#c9c9c9" />
    <Column x={1169} top={340} bottom={400} />
    <path d="M1169 473 1182 461V524l-4 2-9-2z" fill="#c9c9c9" />
    <g fill="none" stroke="#b8b8b8">
      <path d="M351 482 1018 614 1243 403 1133 381M351 606 972 729 1196 518 1134 505" />
      <path d="M572 401V650M351 357V606" />
      <path d="M652 417v34M652 541v34" stroke="#bdb6b6" />
    </g>
    {SUPPORTS.map(([x, y]) => <rect key={`${x}-${y}`} x={x - 1} y={y - 1} width="4" height="2" fill="#c4bab2" />)}
    {[[351, 482], [572, 525], [351, 606], [572, 650], [972, 729], [1196, 518], [1243, 403], [1018, 614], [652, 451], [652, 575]].map(([x, y]) => (
      <rect key={`${x}-${y}`} x={x - 1} y={y - 1} width="3" height="3" fill="#bfb2b2" />
    ))}
    <path d="M576 147 1243 279 1018 490 351 357z" fill="#ff0" />
    <path d={MESH} fill="none" stroke="#a4a48c" strokeDasharray="1 2" shapeRendering="crispEdges" />
    <path d="M576 147 1243 279M351 357 576 147" fill="none" stroke="#222" />
    <path d="M1243 279 1018 490 351 357" fill="none" stroke="#000" strokeWidth="1.500" />
    {[[576, 147], [1243, 279], [1018, 490], [351, 357], [486, 231], [572, 401]].map(([x, y]) => (
      <rect key={`${x}-${y}`} x={x - 2} y={y - 2} width="4" height="4" fill="#8b0000" />
    ))}
    <path d="M629 282h40v18h-35l-7 2 2-3z" fill="#fffdf5" stroke="#000" strokeWidth="1.300" />
    <path d="m627 302 6-3 2 1z" stroke="#000" />
    <text x="631" y="295" fontSize="12" fontWeight="bold" fontFamily="Liberation Mono, monospace" fill="#4040c8">13.20</text>
  </svg>
);

const App = () => {
  return (
    <div className="flex h-screen min-h-0 flex-col overflow-hidden bg-[#cfd3dc] font-['Noto_Sans',sans-serif] text-black">
      <header className="flex h-[30px] shrink-0 items-center gap-1.5 bg-white pl-[7px]">
        <svg viewBox="0 0 16 16" width="16" height="16">
          <path d="m3 4 5-3 4 1 3 5-2 5-5 3-4-2z" fill="#6b87b4" stroke="#2c3e60" />
          <path d="m5 5 5-3M7 9l6-6M9 13l5-5" stroke="#24344f" />
          <path d="M6 7H2v3q4-1 4 2t-5 2" fill="none" stroke="#6d5210" strokeWidth="3" />
          <path d="M6 7H2v3q4-1 4 2t-5 2" fill="none" stroke="#f4c430" strokeWidth="1.600" />
        </svg>
        <h1 className="text-[11px]">RFEM 5.21.00 x64</h1>
      </header>

      <nav className="flex h-6 shrink-0 items-center gap-px pl-1">
        <svg width="3" height="16" className="shrink-0"><path d="M1.500 0v16" stroke="#b2b6c0" strokeWidth="2" strokeDasharray="2 2" /></svg>
        <svg viewBox="0 0 16 13" width="16" height="13" className="mx-0.5 shrink-0">
          <path d="M0 0h16v13H0z" fill="#1b2260" />
          <path d="M0 8.500h16M6 2v11M6 2 0 8M6 2l9 6.500M9 4v4" stroke="#fff" fill="none" />
        </svg>
        {MENU.map((item, i) => (
          <button key={item} className="shrink-0 px-[7px] text-[11px] text-[#4c4f58]">
            {item.slice(0, HOTKEY[i])}<u className="underline-offset-2">{item[HOTKEY[i]]}</u>{item.slice(HOTKEY[i] + 1)}
          </button>
        ))}
      </nav>

      <div className="flex h-[27px] shrink-0 pt-px">
        <Bar>
          <ToolItems items={FILE_BAR} />
          <div className="relative flex h-[23px] w-[220px] shrink-0 border-2 border-[#0000f0] bg-white">
            <select aria-label="Load combination" className="w-full appearance-none bg-white pl-[3px] text-[11px] outline-none">
              <option>CO9 - 1.35*LC1 + 1.05*LC2 + 1.5*LC4</option>
            </select>
            <span className="pointer-events-none absolute inset-y-0 right-0 flex w-3.5 items-center justify-center bg-[#dde1e9]">
              <Arrow />
            </span>
          </div>
          <ToolItems items={RESULT_BAR} />
        </Bar>
        <Bar><ToolItems items={EDIT_BAR} /></Bar>
        <Bar><ToolItems items={EXPORT_BAR} /></Bar>
      </div>
      <div className="flex h-[26px] shrink-0">
        <Bar><ToolItems items={INSERT_BAR} /></Bar>
        <Bar><ToolItems items={VIEW_BAR} /></Bar>
        <Bar><ToolItems items={DISPLAY_BAR} /></Bar>
      </div>

      <main className="flex min-h-0 flex-1">
        <aside className="flex w-[284px] shrink-0 flex-col border-r border-[#a0a4ae] bg-[#e9ecf2]">
          <div className="flex h-5 shrink-0 items-center bg-[#b9c0ca] pl-1 text-[11px] text-[#444]">
            <h2 className="flex-1">Project Navigator - Results</h2>
            <button aria-label="Pin" className="flex w-4 justify-center">
              <svg width="8" height="10"><path d="M2 .5h4v5H2zM0 5.500h8M4 6v4M5.500 0v5" stroke="#666" fill="none" /></svg>
            </button>
            <button aria-label="Close" className="flex w-4 justify-center">
              <svg width="9" height="9"><path d="m1 1 7 7M8 1 1 8" stroke="#666" strokeWidth="1.300" /></svg>
            </button>
          </div>
          <div className="mx-0.5 mt-0.5 min-h-0 flex-1 border-l border-[#d0d4dc] bg-[#fcfbf4] pl-0.5">
            <ul>{TOP_ROWS.map((row, i) => <TreeRow key={i} row={row} group="results" />)}</ul>
            <div className="relative">
              <ul>{LOAD_ROWS.map((row, i) => <TreeRow key={i} row={row} group={row.depth === 1 ? 'fe' : 'direction'} />)}</ul>
              <div className="pointer-events-none absolute -bottom-px -top-0.5 left-px w-[165px] border-2 border-[#0000f0]" />
            </div>
            <ul>{BOTTOM_ROWS.map((row, i) => <TreeRow key={i} row={row} group="results" />)}</ul>
          </div>
        </aside>

        <section className="relative ml-[6px] min-w-0 flex-1 overflow-hidden border-l border-t border-[#7d8088] bg-white">
          <Model />
          <div className="absolute -left-px -top-px whitespace-nowrap border-2 border-[#0000f0] bg-white pb-px pl-[3px] pt-1 font-['Liberation_Sans',sans-serif] text-[11px] leading-[14px]">
            <p>Visibility mode</p>
            <p>Distribution of load [kN/m^2]</p>
            <p>CO9 : 1.35*LC1 + 1.05*LC2 + 1.5*LC4</p>
          </div>
        </section>
      </main>
    </div>
  );
};

export default App;
